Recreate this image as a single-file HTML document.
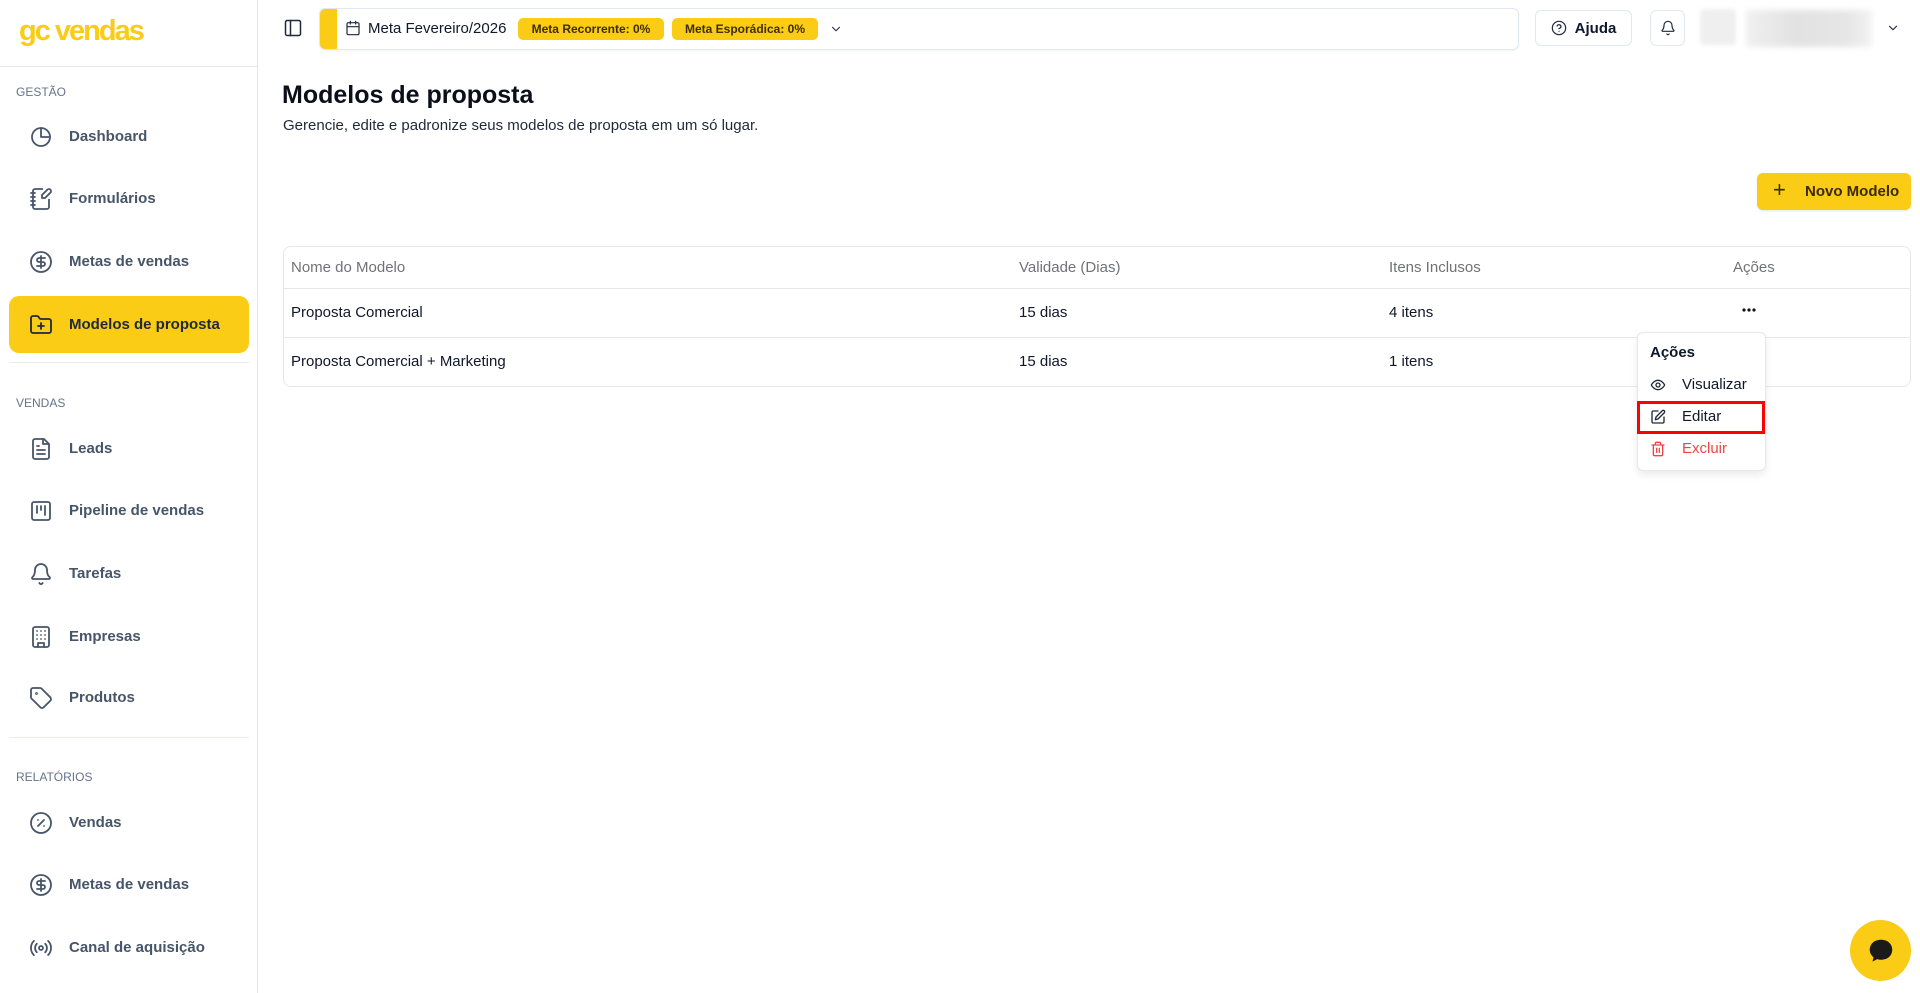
<!DOCTYPE html>
<html><head><meta charset="utf-8"><style>
*{box-sizing:border-box;margin:0;padding:0}
body{width:1920px;height:993px;overflow:hidden;background:#fff;font-family:"Liberation Sans",sans-serif;color:#0f172a;position:relative}
.abs{position:absolute}
.sb{position:absolute;left:0;top:0;width:258px;height:993px;border-right:1px solid #e5e7eb}
.logo{position:absolute;left:19px;top:15px;font-size:29px;font-weight:bold;color:#facc15;letter-spacing:-2px}
.sec{position:absolute;left:16px;font-size:12px;color:#64748b;font-weight:500}
.it{position:absolute;left:9px;width:240px;height:57px;border-radius:10px;display:flex;align-items:center;font-size:15px;color:#475569;font-weight:bold}
.it svg{position:absolute;left:20px;width:24px;height:24px;fill:none;stroke:#475569;stroke-width:1.8;stroke-linecap:round;stroke-linejoin:round}
.it span{position:absolute;left:60px}
.act{background:#facc15;color:#1e293b}
.hr{position:absolute;left:9px;width:240px;height:1px;background:#eeeae6}
.badge{position:absolute;top:18px;height:22px;background:#facc15;border-radius:5px;font-size:12px;font-weight:bold;color:#3f2d00;display:flex;align-items:center;justify-content:center}
.ic{fill:none;stroke:#1e293b;stroke-width:2;stroke-linecap:round;stroke-linejoin:round}
</style></head><body>
<div class="sb">
<div class="logo">gc vendas</div>
<div class="abs" style="left:0;top:66px;width:258px;height:1px;background:#e5e7eb"></div>
<div class="sec" style="top:85px">GESTÃO</div>
<div class="it" style="top:108px"><svg viewBox="0 0 24 24"><path d="M21 12A9 9 0 1 1 12 3"/><path d="M21 12a9 9 0 0 0-9-9v9z"/></svg><span>Dashboard</span></div>
<div class="it" style="top:170px"><svg viewBox="0 0 24 24"><path d="M13.4 2H6a2 2 0 0 0-2 2v16a2 2 0 0 0 2 2h12a2 2 0 0 0 2-2v-7.4"/><path d="M2 6h4M2 10h4M2 14h4M2 18h4"/><path d="M21.4 5.6a2 2 0 0 0-3-3L13 8v3h3z"/></svg><span>Formulários</span></div>
<div class="it" style="top:233px"><svg viewBox="0 0 24 24"><circle cx="12" cy="12" r="10"/><path d="M16 8h-6a2 2 0 1 0 0 4h4a2 2 0 1 1 0 4H8M12 18V6"/></svg><span>Metas de vendas</span></div>
<div class="it act" style="top:296px"><svg viewBox="0 0 24 24" style="stroke:#1e293b"><path d="M12 10v6M9 13h6"/><path d="M20 20a2 2 0 0 0 2-2V8a2 2 0 0 0-2-2h-7.9a2 2 0 0 1-1.7-.9l-.8-1.2A2 2 0 0 0 7.9 3H4a2 2 0 0 0-2 2v13a2 2 0 0 0 2 2z"/></svg><span>Modelos de proposta</span></div>
<div class="hr" style="top:362px"></div>
<div class="sec" style="top:396px">VENDAS</div>
<div class="it" style="top:420px"><svg viewBox="0 0 24 24"><path d="M15 2H6a2 2 0 0 0-2 2v16a2 2 0 0 0 2 2h12a2 2 0 0 0 2-2V7z"/><path d="M14 2v5h5M16 13H8M16 17H8M10 9H8"/></svg><span>Leads</span></div>
<div class="it" style="top:482px"><svg viewBox="0 0 24 24"><rect x="3" y="3" width="18" height="18" rx="2"/><path d="M8 7v7M12 7v4M16 7v9"/></svg><span>Pipeline de vendas</span></div>
<div class="it" style="top:545px"><svg viewBox="0 0 24 24"><path d="M10.3 21a1.9 1.9 0 0 0 3.4 0"/><path d="M3.3 15.3A1 1 0 0 0 4 17h16a1 1 0 0 0 .7-1.7C19.4 14 18 12.5 18 8A6 6 0 0 0 6 8c0 4.5-1.4 6-2.7 7.3"/></svg><span>Tarefas</span></div>
<div class="it" style="top:608px"><svg viewBox="0 0 24 24"><rect x="4" y="2" width="16" height="20" rx="2"/><path d="M9 22v-4h6v4M8 6h.01M16 6h.01M12 6h.01M12 10h.01M12 14h.01M16 10h.01M16 14h.01M8 10h.01M8 14h.01"/></svg><span>Empresas</span></div>
<div class="it" style="top:669px"><svg viewBox="0 0 24 24"><path d="M12.6 2.6A2 2 0 0 0 11.2 2H4a2 2 0 0 0-2 2v7.2a2 2 0 0 0 .6 1.4l8.7 8.7a2.4 2.4 0 0 0 3.4 0l6.6-6.6a2.4 2.4 0 0 0 0-3.4z"/><circle cx="7.5" cy="7.5" r=".5"/></svg><span>Produtos</span></div>
<div class="hr" style="top:737px"></div>
<div class="sec" style="top:770px">RELATÓRIOS</div>
<div class="it" style="top:794px"><svg viewBox="0 0 24 24"><circle cx="12" cy="12" r="10"/><path d="M15 9l-6 6M9 9h.01M15 15h.01"/></svg><span>Vendas</span></div>
<div class="it" style="top:856px"><svg viewBox="0 0 24 24"><circle cx="12" cy="12" r="10"/><path d="M16 8h-6a2 2 0 1 0 0 4h4a2 2 0 1 1 0 4H8M12 18V6"/></svg><span>Metas de vendas</span></div>
<div class="it" style="top:919px"><svg viewBox="0 0 24 24"><path d="M4.9 19.1C1 15.2 1 8.8 4.9 4.9M7.8 16.2c-2.3-2.3-2.3-6.1 0-8.5M16.2 7.8c2.3 2.3 2.3 6.1 0 8.5M19.1 4.9C23 8.8 23 15.1 19.1 19"/><circle cx="12" cy="12" r="2"/></svg><span>Canal de aquisição</span></div>
</div>

<svg class="abs ic" style="left:283px;top:18px;stroke-width:1.8" width="20" height="20" viewBox="0 0 24 24"><rect x="3" y="3" width="18" height="18" rx="2"/><path d="M9 3v18"/></svg>
<div class="abs" style="left:319px;top:8px;width:1200px;height:42px;border:1px solid #e2e8f0;border-radius:6px;overflow:hidden;box-shadow:0 1px 2px rgba(0,0,0,.05)">
<div class="abs" style="left:0;top:0;width:17px;height:42px;background:#facc15"></div></div>
<svg class="abs ic" style="left:345px;top:20px;stroke-width:1.8" width="16" height="16" viewBox="0 0 24 24"><rect x="3" y="4" width="18" height="18" rx="2"/><path d="M16 2v4M8 2v4M3 10h18"/></svg>
<div class="abs" style="left:368px;top:20px;font-size:15px;color:#0f172a">Meta Fevereiro/2026</div>
<div class="badge" style="left:518px;width:146px">Meta Recorrente: 0%</div>
<div class="badge" style="left:672px;width:146px">Meta Esporádica: 0%</div>
<svg class="abs ic" style="left:829px;top:22px;stroke-width:1.8" width="14" height="14" viewBox="0 0 24 24"><path d="M6 9l6 6 6-6"/></svg>

<div class="abs" style="left:1535px;top:10px;width:97px;height:36px;border:1px solid #e2e8f0;border-radius:6px;display:flex;align-items:center;justify-content:center;gap:8px;font-size:15px;font-weight:bold;color:#0f172a"><svg class="ic" width="16" height="16" viewBox="0 0 24 24" style="stroke-width:1.8"><circle cx="12" cy="12" r="10"/><path d="M9.1 9a3 3 0 0 1 5.8 1c0 2-3 3-3 3M12 17h.01"/></svg>Ajuda</div>
<div class="abs" style="left:1650px;top:10px;width:35px;height:36px;border:1px solid #e2e8f0;border-radius:6px;display:flex;align-items:center;justify-content:center"><svg class="ic" width="16" height="16" viewBox="0 0 24 24" style="stroke-width:1.8"><path d="M10.3 21a1.9 1.9 0 0 0 3.4 0"/><path d="M3.3 15.3A1 1 0 0 0 4 17h16a1 1 0 0 0 .7-1.7C19.4 14 18 12.5 18 8A6 6 0 0 0 6 8c0 4.5-1.4 6-2.7 7.3"/></svg></div>
<div class="abs" style="left:1700px;top:9px;width:36px;height:36px;background:#efefef;border-radius:4px;filter:blur(2px)"></div>
<div class="abs" style="left:1746px;top:10px;width:126px;height:37px;background:linear-gradient(90deg,#f0f0f0,#e2e2e2 40%,#e6e6e6 80%,#f2f2f2);filter:blur(3px)"></div>
<svg class="abs ic" style="left:1886px;top:21px;stroke-width:2" width="14" height="14" viewBox="0 0 24 24"><path d="M6 9l6 6 6-6"/></svg>

<div class="abs" style="left:282px;top:81px;font-size:25px;font-weight:bold;color:#0b0f1a">Modelos de proposta</div>
<div class="abs" style="left:283px;top:117px;font-size:15px;color:#1f2937">Gerencie, edite e padronize seus modelos de proposta em um só lugar.</div>

<div class="abs" style="left:1757px;top:173px;width:154px;height:37px;background:#facc15;border-radius:6px;display:flex;align-items:center;font-size:15px;font-weight:bold;color:#3a2a00;box-shadow:0 1px 2px rgba(0,0,0,.1)"><span style="position:absolute;left:16px;font-size:22px;font-weight:normal;top:4px">+</span><span style="position:absolute;left:48px">Novo Modelo</span></div>

<div class="abs" style="left:283px;top:246px;width:1628px;height:141px;border:1px solid #e5e7eb;border-radius:8px"></div>
<div class="abs" style="left:284px;top:288px;width:1626px;height:1px;background:#e5e7eb"></div>
<div class="abs" style="left:284px;top:337px;width:1626px;height:1px;background:#e5e7eb"></div>
<div class="abs" style="top:259px;left:291px;font-size:15px;color:#71717a">Nome do Modelo</div>
<div class="abs" style="top:259px;left:1019px;font-size:15px;color:#71717a">Validade (Dias)</div>
<div class="abs" style="top:259px;left:1389px;font-size:15px;color:#71717a">Itens Inclusos</div>
<div class="abs" style="top:259px;left:1733px;font-size:15px;color:#71717a">Ações</div>
<div class="abs" style="top:304px;left:291px;font-size:15px">Proposta Comercial</div>
<div class="abs" style="top:304px;left:1019px;font-size:15px">15 dias</div>
<div class="abs" style="top:304px;left:1389px;font-size:15px">4 itens</div>
<svg class="abs" style="left:1741px;top:307px" width="16" height="6" viewBox="0 0 16 6"><circle cx="3" cy="3" r="1.6" fill="#111"/><circle cx="8" cy="3" r="1.6" fill="#111"/><circle cx="13" cy="3" r="1.6" fill="#111"/></svg>
<div class="abs" style="top:353px;left:291px;font-size:15px">Proposta Comercial + Marketing</div>
<div class="abs" style="top:353px;left:1019px;font-size:15px">15 dias</div>
<div class="abs" style="top:353px;left:1389px;font-size:15px">1 itens</div>

<div class="abs" style="left:1637px;top:332px;width:129px;height:139px;background:#fff;border:1px solid #e5e7eb;border-radius:6px;box-shadow:0 4px 8px rgba(0,0,0,.08)"></div>
<div class="abs" style="left:1650px;top:344px;font-size:15px;font-weight:bold">Ações</div>
<svg class="abs ic" style="left:1650px;top:377px;stroke-width:2" width="16" height="16" viewBox="0 0 24 24"><path d="M2 12s3.5-7 10-7 10 7 10 7-3.5 7-10 7S2 12 2 12z"/><circle cx="12" cy="12" r="3"/></svg>
<div class="abs" style="left:1682px;top:376px;font-size:15px">Visualizar</div>
<div class="abs" style="left:1637px;top:401px;width:128px;height:33px;border:3px solid #ff0000"></div>
<svg class="abs ic" style="left:1650px;top:409px;stroke-width:2" width="16" height="16" viewBox="0 0 24 24"><path d="M12 3H5a2 2 0 0 0-2 2v14a2 2 0 0 0 2 2h14a2 2 0 0 0 2-2v-7"/><path d="M18.4 2.6a2.1 2.1 0 1 1 3 3L12 15l-4 1 1-4z"/></svg>
<div class="abs" style="left:1682px;top:408px;font-size:15px">Editar</div>
<svg class="abs ic" style="left:1650px;top:441px;stroke:#ef4444;stroke-width:2" width="16" height="16" viewBox="0 0 24 24"><path d="M3 6h18M19 6v14a2 2 0 0 1-2 2H7a2 2 0 0 1-2-2V6M8 6V4a2 2 0 0 1 2-2h4a2 2 0 0 1 2 2v2M10 11v6M14 11v6"/></svg>
<div class="abs" style="left:1682px;top:440px;font-size:15px;color:#ef4444">Excluir</div>

<div class="abs" style="left:1850px;top:920px;width:61px;height:61px;border-radius:50%;background:#facc15;display:flex;align-items:center;justify-content:center">
<svg width="30" height="30" viewBox="0 0 24 24"><path d="M12 3C6.5 3 3 6.5 3 11c0 2.5 1.2 4.6 3 6l-.8 3.5 3.8-2c1 .3 2 .5 3 .5 5.5 0 9-3.5 9-8s-3.5-8-9-8z" fill="#1a1a1a"/></svg></div>
</body></html>
